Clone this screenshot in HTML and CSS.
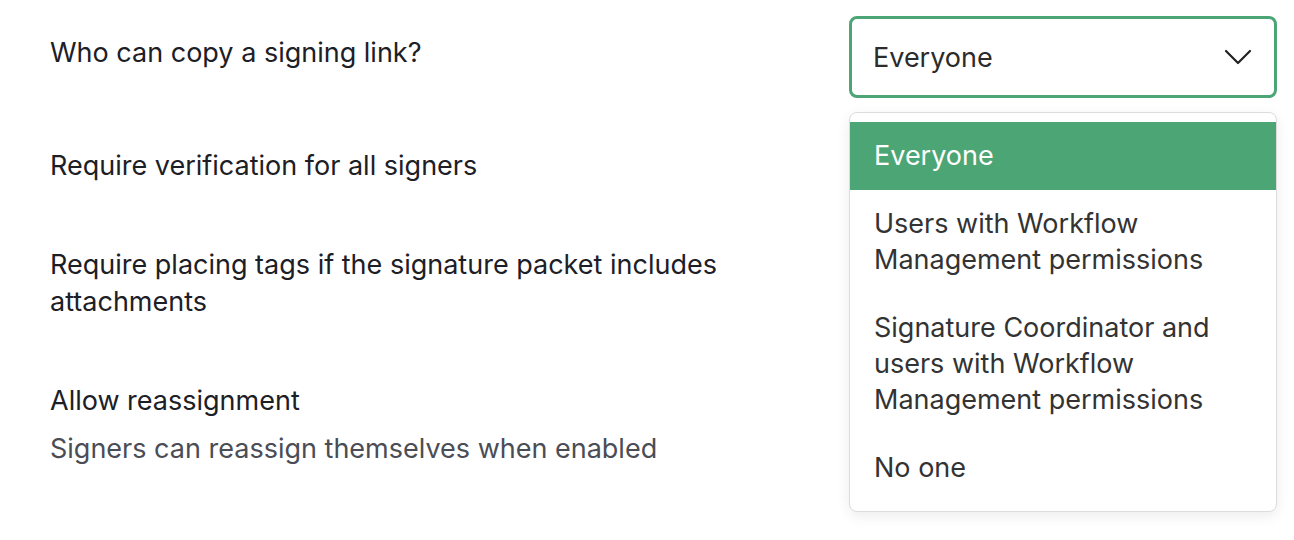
FILE: index.html
```html
<!DOCTYPE html>
<html lang="en">
<head>
  <meta charset="UTF-8">
  <meta name="viewport" content="width=device-width, initial-scale=1.0">
  <title>Signing Settings</title>
  <link rel="stylesheet" href="styles.css">
</head>
<body>
  <div class="settings">

    <!-- Copy link -->
    <div class="row row-first">
      <div class="label label-first">Who can copy a signing link?</div>
      <div class="control">
        <div class="select-wrap">
          <div class="select">
            <span>Everyone</span>
            <svg class="chevron" width="28" height="16" viewBox="0 0 28 16">
              <path d="M2 2 L14 14 L26 2" fill="none" stroke="#222" stroke-width="2.2" stroke-linecap="round" stroke-linejoin="round"/>
            </svg>
          </div>

          <ul class="menu">
            <li class="option selected">Everyone</li>
            <li class="option">Users with Workflow Management permissions</li>
            <li class="option">Signature Coordinator and users with Workflow Management permissions</li>
            <li class="option">No one</li>
          </ul>
        </div>
      </div>
    </div>

    <!-- Verification -->
    <div class="row row-verify">
      <div class="label">Require verification for all signers</div>
      <div class="control"></div>
    </div>

    <!-- Tags -->
    <div class="row row-tags">
      <div class="label">Require placing tags if the signature packet includes attachments</div>
      <div class="control"></div>
    </div>

    <!-- Reassignment -->
    <div class="row row-reassign">
      <div class="label">
        Allow reassignment
        <div class="desc">Signers can reassign themselves when enabled</div>
      </div>
      <div class="control"></div>
    </div>

  </div>
</body>
</html>
```

FILE: styles.css
```css
html, body {
  height: 100%;
}

body {
  margin: 0;
  font-family: Inter, "Noto Sans", Arial, sans-serif;
  background: #fff;
  color: #1c2026;
}

.settings {
  padding: 16px 17px 0 50px;
}

.row {
  display: flex;
  justify-content: space-between;
  align-items: flex-start;
}

.label {
  width: 700px;
  font-size: 27px;
  line-height: 37px;
}

.label-first {
  padding-top: 18px;
}

.row-verify {
  margin-top: 49px;
}

.row-tags {
  margin-top: 62px;
}

.row-reassign {
  margin-top: 62px;
}

.desc {
  margin-top: 11px;
  color: #4a4d55;
}

.control {
  width: 428px;
}

.select-wrap {
  position: relative;
}

.select {
  height: 82px;
  box-sizing: border-box;
  border: 3px solid #4ba574;
  border-radius: 8px;
  padding: 0 22px 0 21px;
  display: flex;
  align-items: center;
  justify-content: space-between;
  font-size: 27px;
  color: #2b2b2b;
}

.menu {
  position: absolute;
  top: calc(100% + 14px);
  left: 0;
  right: 0;
  margin: 0;
  padding: 9px 0;
  list-style: none;
  background: #fff;
  border: 1px solid #dcdcdc;
  border-radius: 8px;
  box-shadow: 0 4px 14px rgba(0, 0, 0, 0.08);
}

.option {
  padding: 16px 40px 16px 24px;
  font-size: 27px;
  line-height: 36px;
  color: #333;
}

.option.selected {
  background: #4ba574;
  color: #fff;
}
```
